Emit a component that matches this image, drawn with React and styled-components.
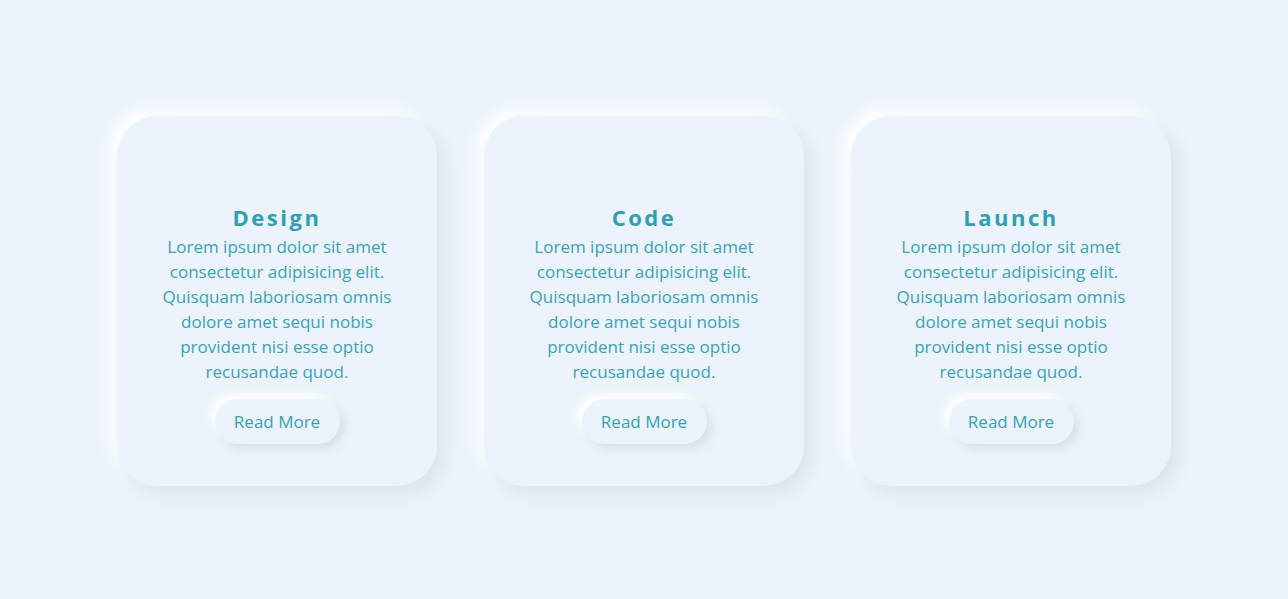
import React from 'react';
import styled, { createGlobalStyle } from 'styled-components';

const GlobalStyle = createGlobalStyle`
  html, body {
    margin: 0;
    padding: 0;
    background: #ecf3fa;
  }
  body {
    font-family: "Open Sans", "Liberation Sans", sans-serif;
  }
`;

const Page = styled.div`
  min-height: 599px;
  display: flex;
  align-items: center;
  justify-content: center;
  gap: 47px;
  padding-top: 2px;
  box-sizing: border-box;
`;

const Card = styled.div`
  width: 320px;
  height: 370px;
  box-sizing: border-box;
  border-radius: 40px;
  background: #ecf3fa;
  box-shadow: 8px 8px 16px #dbe4ed, -8px -8px 16px #ffffff;
  display: flex;
  flex-direction: column;
  align-items: center;
  padding-top: 86px;
`;

const Title = styled.h2`
  margin: 0 0 2px;
  font-size: 22px;
  line-height: 30px;
  font-weight: 700;
  letter-spacing: 2.5px;
  color: #2f9fb2;
`;

const Text = styled.p`
  margin: 0;
  width: 244px;
  text-align: center;
  font-size: 17px;
  line-height: 25px;
  color: #36a4b8;
`;

const Button = styled.button`
  margin-top: 15px;
  width: 125px;
  height: 45px;
  border: none;
  border-radius: 23px;
  background: #ecf3fa;
  box-shadow: 5px 5px 9px #d7e0e9, -5px -5px 9px #ffffff;
  font-family: inherit;
  font-size: 17px;
  color: #33a2b6;
  cursor: pointer;
`;

const items = ['Design', 'Code', 'Launch'];

const App = () => (
  <React.Fragment>
    <GlobalStyle />
    <Page>
      {items.map(name => (
        <Card key={name}>
          <Title>{name}</Title>
          <Text>
            Lorem ipsum dolor sit amet consectetur adipisicing elit. Quisquam
            laboriosam omnis dolore amet sequi nobis provident nisi esse optio
            recusandae quod.
          </Text>
          <Button>Read More</Button>
        </Card>
      ))}
    </Page>
  </React.Fragment>
);

export default App;
